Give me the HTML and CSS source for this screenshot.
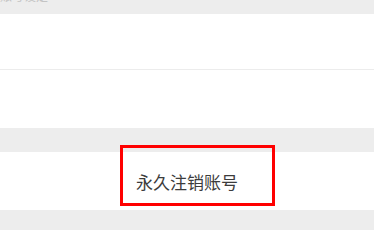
FILE: index.html
```html
<!DOCTYPE html>
<html lang="zh-CN">
<head>
  <meta charset="UTF-8" />
  <meta name="viewport" content="width=device-width, initial-scale=1" />
  <title>账号设置</title>
  <link rel="stylesheet" href="styles.css">
</head>
<body>

<div class="page">
  <div class="group-title">账号设定</div>

  <section class="group">
    <div class="cell"></div>
    <div class="cell"></div>
  </section>

  <div class="gap"></div>

  <section class="group">
    <div class="cell cell-center">
      永久注销账号
      <span class="mark"></span>
    </div>
  </section>

  <div class="gap gap-end"></div>
</div>

</body>
</html>
```

FILE: styles.css
```css
body {
  margin: 0;
  padding: 0;
  background: #ededed;
  font-family: "Noto Sans CJK SC", "Noto Sans", sans-serif;
  overflow: hidden;
}
.page {
  margin-top: -18px;
}
.group-title {
  height: 32px;
  padding-left: 0;
  font-size: 12px;
  line-height: 27px;
  color: #c4c4c4;
  overflow: hidden;
}
.group {
  background: #fff;
}
.cell {
  height: 55px;
  border-bottom: 1px solid #ececec;
}
.cell:last-child {
  height: 58px;
  border-bottom: none;
}
.cell-center {
  position: relative;
  display: flex;
  align-items: center;
  justify-content: center;
  height: 57px;
  font-size: 17px;
  color: #3c3c3c;
}
.gap {
  height: 24px;
}
.gap-end {
  height: 21px;
}
.mark {
  position: absolute;
  left: 120px;
  top: -7px;
  width: 149px;
  height: 55px;
  border: 3px solid #ff0000;
}
```
